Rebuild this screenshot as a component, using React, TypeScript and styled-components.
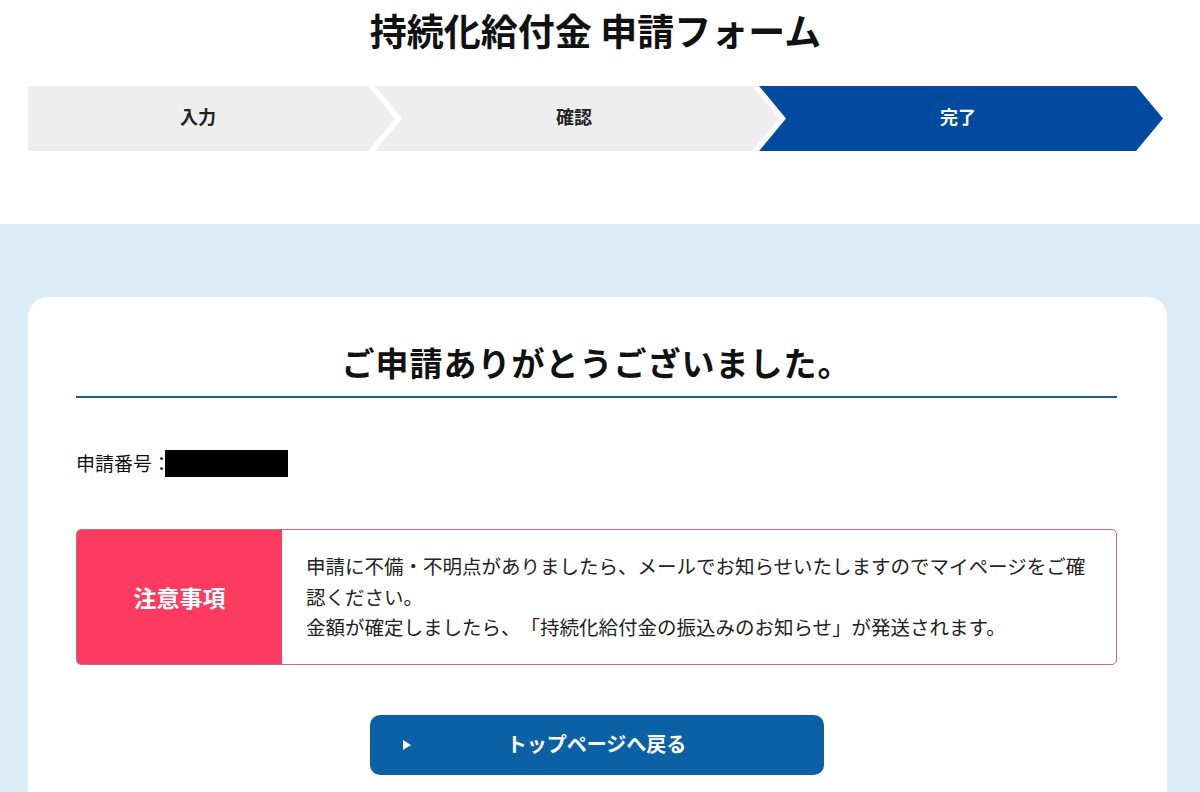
import styled, { createGlobalStyle } from 'styled-components';

const GlobalStyle = createGlobalStyle`
  html, body {
    margin: 0;
    padding: 0;
    background: #ffffff;
    font-family: "Noto Sans CJK JP", "Noto Sans", sans-serif;
    color: #111111;
    text-spacing-trim: space-all;
  }
`;

const CHEVRON = 27;

const Header = styled.header`
  padding: 8px 0 73px 28px;
  width: 1135px;
`;

const PageTitle = styled.h1`
  margin: 0;
  text-align: center;
  font-size: 37px;
  line-height: 44px;
  font-weight: 700;
  color: #111111;
`;

const StepList = styled.ol`
  display: flex;
  list-style: none;
  margin: 34px 0 0;
  padding: 0;
  height: 65px;
`;

const Step = styled.li<{ $active?: boolean; $first?: boolean }>`
  box-sizing: border-box;
  flex: ${(p) => (p.$first ? '0 0 367px' : '1 1 0')};
  margin-left: ${(p) => (p.$first ? '0' : '-20px')};
  display: flex;
  align-items: center;
  justify-content: center;
  padding: ${(p) =>
    p.$first ? `0 ${CHEVRON}px 6px 0` : `0 ${CHEVRON + 6}px 6px ${CHEVRON}px`};
  background: ${(p) => (p.$active ? '#004a9f' : '#eeeeee')};
  color: ${(p) => (p.$active ? '#ffffff' : '#222222')};
  font-size: 18px;
  font-weight: 700;
  clip-path: ${(p) =>
    p.$first
      ? `polygon(0 0, calc(100% - ${CHEVRON}px) 0, 100% 50%, calc(100% - ${CHEVRON}px) 100%, 0 100%)`
      : `polygon(0 0, calc(100% - ${CHEVRON}px) 0, 100% 50%, calc(100% - ${CHEVRON}px) 100%, 0 100%, ${CHEVRON}px 50%)`};
`;

const Section = styled.main`
  background: #dcecf7;
  padding: 73px 0 40px;
  min-height: 500px;
`;

const Card = styled.div`
  width: 1139px;
  margin-left: 28px;
  box-sizing: border-box;
  background: #ffffff;
  border-radius: 20px;
  padding: 41px 50px 40px 48px;
`;

const CardTitle = styled.h2`
  margin: 0;
  padding-bottom: 10px;
  border-bottom: 2px solid #1f5b8c;
  text-align: center;
  font-size: 33px;
  line-height: 48px;
  font-weight: 700;
  letter-spacing: 1px;
  color: #111111;
`;

const NumberRow = styled.p`
  margin: 50px 0 0;
  font-size: 19px;
  line-height: 30px;
  display: flex;
  align-items: center;
`;

const Redacted = styled.span`
  display: inline-block;
  width: 123px;
  height: 27px;
  margin-left: -6px;
  background: #000000;
`;

const Notice = styled.div`
  margin-top: 51px;
  display: flex;
  border: 1px solid #c96b82;
  border-radius: 5px;
  overflow: hidden;
`;

const NoticeLabel = styled.div`
  flex: 0 0 205px;
  display: flex;
  align-items: center;
  justify-content: center;
  background: #fd3a5f;
  color: #ffffff;
  font-size: 23px;
  font-weight: 700;
`;

const NoticeBody = styled.div`
  flex: 1;
  padding: 21px 30px 21px 24px;
  font-size: 19.5px;
  line-height: 30.5px;
  color: #222222;
`;

const NoticeLine = styled.p`
  margin: 0;
`;

const ButtonRow = styled.div`
  margin-top: 50px;
  display: flex;
  justify-content: center;
`;

const BackButton = styled.button`
  width: 454px;
  height: 60px;
  display: grid;
  grid-template-columns: 60px 1fr 60px;
  align-items: center;
  border: none;
  border-radius: 10px;
  background: #0b61a4;
  color: #ffffff;
  font-family: inherit;
  font-size: 20px;
  font-weight: 700;
  cursor: pointer;
  padding: 0 0 3px;
`;

const Arrow = styled.span`
  justify-self: end;
  width: 0;
  height: 0;
  border-top: 5px solid transparent;
  border-bottom: 5px solid transparent;
  border-left: 8px solid #ffffff;
  margin: 3px 19px 0 0;
`;

const steps = ['入力', '確認', '完了'];

const App = () => {
  return (
    <>
      <GlobalStyle />
      <Header>
        <PageTitle>持続化給付金 申請フォーム</PageTitle>
        <StepList>
          {steps.map((label, i) => (
            <Step key={label} $first={i === 0} $active={i === steps.length - 1}>
              {label}
            </Step>
          ))}
        </StepList>
      </Header>
      <Section>
        <Card>
          <CardTitle>ご申請ありがとうございました。</CardTitle>
          <NumberRow>
            申請番号：<Redacted />
          </NumberRow>
          <Notice>
            <NoticeLabel>注意事項</NoticeLabel>
            <NoticeBody>
              <NoticeLine>
                申請に不備・不明点がありましたら、メールでお知らせいたしますのでマイページをご確認ください。
              </NoticeLine>
              <NoticeLine>
                金額が確定しましたら、「持続化給付金の振込みのお知らせ」が発送されます。
              </NoticeLine>
            </NoticeBody>
          </Notice>
          <ButtonRow>
            <BackButton type="button">
              <Arrow />
              <span>トップページへ戻る</span>
              <span />
            </BackButton>
          </ButtonRow>
        </Card>
      </Section>
    </>
  );
};

export default App;
